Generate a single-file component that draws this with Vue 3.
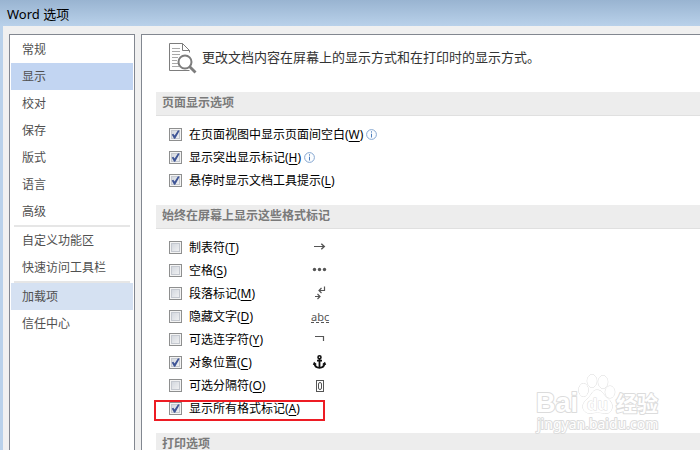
<script setup>
import { ref } from 'vue'

const navGroups = [
  ['常规', '显示', '校对', '保存', '版式', '语言', '高级'],
  ['自定义功能区', '快速访问工具栏'],
  ['加载项', '信任中心'],
]
const current = ref('显示')
const hovered = '加载项'

const pageOptions = ref([
  { id: 'white', text: '在页面视图中显示页面间空白', key: 'W', on: true, info: true },
  { id: 'highlight', text: '显示突出显示标记', key: 'H', on: true, info: true },
  { id: 'tips', text: '悬停时显示文档工具提示', key: 'L', on: true, info: false },
])

const markOptions = ref([
  { id: 'tab', text: '制表符', key: 'T', on: false },
  { id: 'space', text: '空格', key: 'S', on: false },
  { id: 'para', text: '段落标记', key: 'M', on: false },
  { id: 'hidden', text: '隐藏文字', key: 'D', on: false },
  { id: 'hyphen', text: '可选连字符', key: 'Y', on: false },
  { id: 'anchor', text: '对象位置', key: 'C', on: true },
  { id: 'break', text: '可选分隔符', key: 'O', on: false },
  { id: 'all', text: '显示所有格式标记', key: 'A', on: true, marked: true },
])
</script>

<template>
  <div class="window">
    <header class="titlebar">Word 选项</header>
    <div class="body">
      <nav class="sidebar">
        <ul v-for="(group, g) in navGroups" :key="g" class="group">
          <li v-for="name in group" :key="name">
            <button
              type="button"
              class="nav-item"
              :class="{ current: current === name, hovered: hovered === name }"
              @click="current = name"
            >{{ name }}</button>
          </li>
        </ul>
      </nav>

      <main class="panel">
        <div class="intro">
          <svg class="doc-icon" width="28" height="31" viewBox="0 0 28 31" fill="none" stroke="#7d7d7d">
            <path d="M20.500 9.500V7.500L13.500.5H.5v27h20" />
            <path d="M13.500.5v7h7" />
            <path d="M3 5.500h8M3 8.500h8M3 11.500h8M3 14.500h6M3 17.500h5M3 20.500h6M3 23.500h7" stroke="#a9a9a9" />
            <circle cx="16" cy="19" r="6.500" fill="#fff" stroke-width="2" />
            <path d="M20.500 23.500l6 6" stroke-width="2.800" />
          </svg>
          <p>更改文档内容在屏幕上的显示方式和在打印时的显示方式。</p>
        </div>

        <h2>页面显示选项</h2>
        <div class="options">
          <div v-for="o in pageOptions" :key="o.id" class="row">
            <input :id="o.id" v-model="o.on" type="checkbox" />
            <label :for="o.id">{{ o.text }}(<u>{{ o.key }}</u>)</label>
            <svg v-if="o.info" class="info" width="11" height="11" viewBox="0 0 11 11">
              <circle cx="5.500" cy="5.500" r="4.900" fill="#fbfdff" stroke="#86a7d0" />
              <path d="M5.500 2.300v1.300M5.500 4.700v3.800" stroke="#4f7fbd" />
            </svg>
          </div>
        </div>

        <h2>始终在屏幕上显示这些格式标记</h2>
        <div class="options">
          <div v-for="o in markOptions" :key="o.id" class="row" :class="{ marked: o.marked }">
            <span class="choice">
              <input :id="o.id" v-model="o.on" type="checkbox" />
              <label :for="o.id">{{ o.text }}(<u>{{ o.key }}</u>)</label>
            </span>
            <span v-if="o.id === 'hidden'" class="abc">abc</span>
            <svg v-else class="symbol" width="18" height="18" viewBox="0 0 18 18" fill="none" stroke="#555">
              <g v-if="o.id === 'tab'">
                <path d="M3 7.500h10.500" />
                <path d="M10.300 4.700l3 2.800-3 2.800" stroke-width="1.400" />
              </g>
              <g v-else-if="o.id === 'space'" fill="#555" stroke="none">
                <circle cx="3.500" cy="7.500" r="1.700" />
                <circle cx="8.500" cy="7.500" r="1.700" />
                <circle cx="13.500" cy="7.500" r="1.700" />
              </g>
              <g v-else-if="o.id === 'para'" stroke-width="1.200">
                <path d="M13.500 1.500v4H8.500M10.500 3l-2.500 2.500 2.500 2.500" />
                <path d="M4 11.500h5M6.500 9l2.500 2.500L6.500 14" />
              </g>
              <path v-else-if="o.id === 'hyphen'" d="M4 5.500h8.500v4.500" stroke-width="1.200" />
              <g v-else-if="o.id === 'anchor'" stroke="#111">
                <circle cx="8.500" cy="3.200" r="1.500" stroke-width="1.600" />
                <path d="M8.500 4.800v9M6 6.700h5" stroke-width="1.800" />
                <path d="M3.600 9.500c.3 2.700 2.200 4.300 4.900 4.300s4.600-1.600 4.900-4.300" stroke-width="2" />
                <path d="M1.800 11L3 7.700l2.900 2.600zM15.200 11L14 7.700l-2.900 2.600z" fill="#111" stroke="none" />
              </g>
              <g v-else-if="o.id === 'break'">
                <rect x="5.500" y="3.500" width="7" height="11" />
                <rect x="7.500" y="5.500" width="3" height="7" rx="1.500" />
              </g>
            </svg>
          </div>
        </div>

        <h2>打印选项</h2>
      </main>
    </div>

    <svg class="watermark" width="136" height="66" viewBox="0 0 136 66" aria-hidden="true">
      <g fill="#fff" stroke="#dcdcdc" paint-order="stroke" stroke-linejoin="round">
        <g stroke-width="2">
          <text x="4" y="44" class="wm-latin">Bai</text>
          <text x="84" y="43" class="wm-cjk">经验</text>
          <text x="5" y="61" class="wm-url">jingyan.baidu.com</text>
        </g>
        <ellipse cx="51.500" cy="22" rx="4.800" ry="6.500" />
        <ellipse cx="60" cy="13" rx="4.800" ry="6.500" />
        <ellipse cx="71" cy="14" rx="4.800" ry="6.500" />
        <ellipse cx="78" cy="24" rx="4.800" ry="6" />
        <path d="M65 22c5 0 6 4 9 7 4 3 7 7 6 11-1 5-5 6-9 5-4-.800-7-.800-11 0-4 1-8-1-9-5-.800-4 2-7 5-10 4-3 4-8 9-8z" />
        <text x="55" y="42" class="wm-du">du</text>
      </g>
    </svg>
  </div>
</template>

<style>
body {
  margin: 0;
  overflow: hidden;
}
</style>

<style scoped>
.window {
  position: relative;
  display: flex;
  flex-direction: column;
  box-sizing: border-box;
  height: 100vh;
  overflow: hidden;
  background: #b9d1ea;
  font: 12px/18px "Noto Sans", "Noto Sans CJK SC", sans-serif;
  color: #000;
}
.titlebar {
  height: 26px;
  padding-left: 7px;
  font-size: 13px;
  line-height: 29px;
  background: linear-gradient(#99b4d1, #b9d1ea);
}
.body {
  display: flex;
  flex: 1;
  gap: 6px;
  min-height: 0;
  margin-left: 3px;
  padding: 8px 0 0 6px;
  background: #f0f0f0;
}
.sidebar {
  box-sizing: border-box;
  width: 126px;
  flex: none;
  padding: 1px;
  border: 1px solid #828790;
  border-bottom: 0;
  background: #fff;
}
.group {
  margin: 0;
  padding: 0;
  list-style: none;
}
.group + .group::before {
  content: "";
  display: block;
  height: 2px;
  margin: 0 3px;
  background: #e6e6e6;
}
.nav-item {
  display: block;
  width: 100%;
  height: 27px;
  padding: 0 11px;
  border: 0;
  background: none;
  color: #505050;
  font: inherit;
  text-align: left;
}
.nav-item.current {
  background: #c2d5f2;
}
.nav-item.hovered {
  background: #d5e1f2;
}
.panel {
  flex: 1;
  min-width: 0;
  overflow: hidden;
  padding-left: 14px;
  border: 1px solid #828790;
  border-width: 1px 0 0 1px;
  background: #fff;
}
.intro {
  display: flex;
  gap: 5px;
  height: 49px;
  padding: 8px 0 0 13px;
}
.intro p {
  margin: 5px 0;
  color: #333;
  font-size: 13px;
}
.doc-icon {
  flex: none;
}
h2 {
  height: 23px;
  margin: 0;
  padding-left: 6px;
  border-bottom: 1px solid #e0e0e0;
  background: #ededed;
  color: #7a7a7a;
  font-size: 12px;
  font-weight: 700;
  line-height: 22px;
}
.options {
  padding: 7px 0 13px 13px;
}
.row {
  position: relative;
  display: flex;
  align-items: center;
  height: 23px;
}
.choice {
  display: flex;
  align-items: center;
  width: 142px;
}
input {
  appearance: none;
  position: relative;
  flex: none;
  width: 13px;
  height: 13px;
  margin: 0 7px 0 0;
  border: 1px solid #8e8f8f;
  background: linear-gradient(135deg, #cdd2da, #f6f6f6);
  box-shadow: inset 0 0 0 1px #f4f4f4, inset 0 0 0 2px #c4c8cf;
}
input:checked::after {
  content: "";
  position: absolute;
  inset: 1px;
  background: #3f5596;
  clip-path: polygon(8% 50%, 26% 42%, 40% 62%, 78% 2%, 96% 8%, 46% 98%, 34% 98%);
}
u {
  text-underline-offset: 2px;
}
.info {
  margin-left: 3px;
}
.abc {
  border-bottom: 1px dashed #555;
  color: #555;
  font-size: 11px;
  line-height: 11px;
}
.marked::after {
  content: "";
  position: absolute;
  top: 3px;
  left: -15px;
  box-sizing: border-box;
  width: 171px;
  height: 21px;
  border: 2px solid #ed1c24;
  pointer-events: none;
}
.watermark {
  position: absolute;
  right: 32px;
  bottom: 16px;
  pointer-events: none;
}
.wm-latin {
  font: 700 27px "Liberation Sans", sans-serif;
}
.wm-du {
  font: 700 17px "Liberation Sans", sans-serif;
}
.wm-cjk {
  font: 700 21px "Noto Sans CJK SC", sans-serif;
}
.wm-url {
  font: 14px "Noto Sans", sans-serif;
}
</style>
